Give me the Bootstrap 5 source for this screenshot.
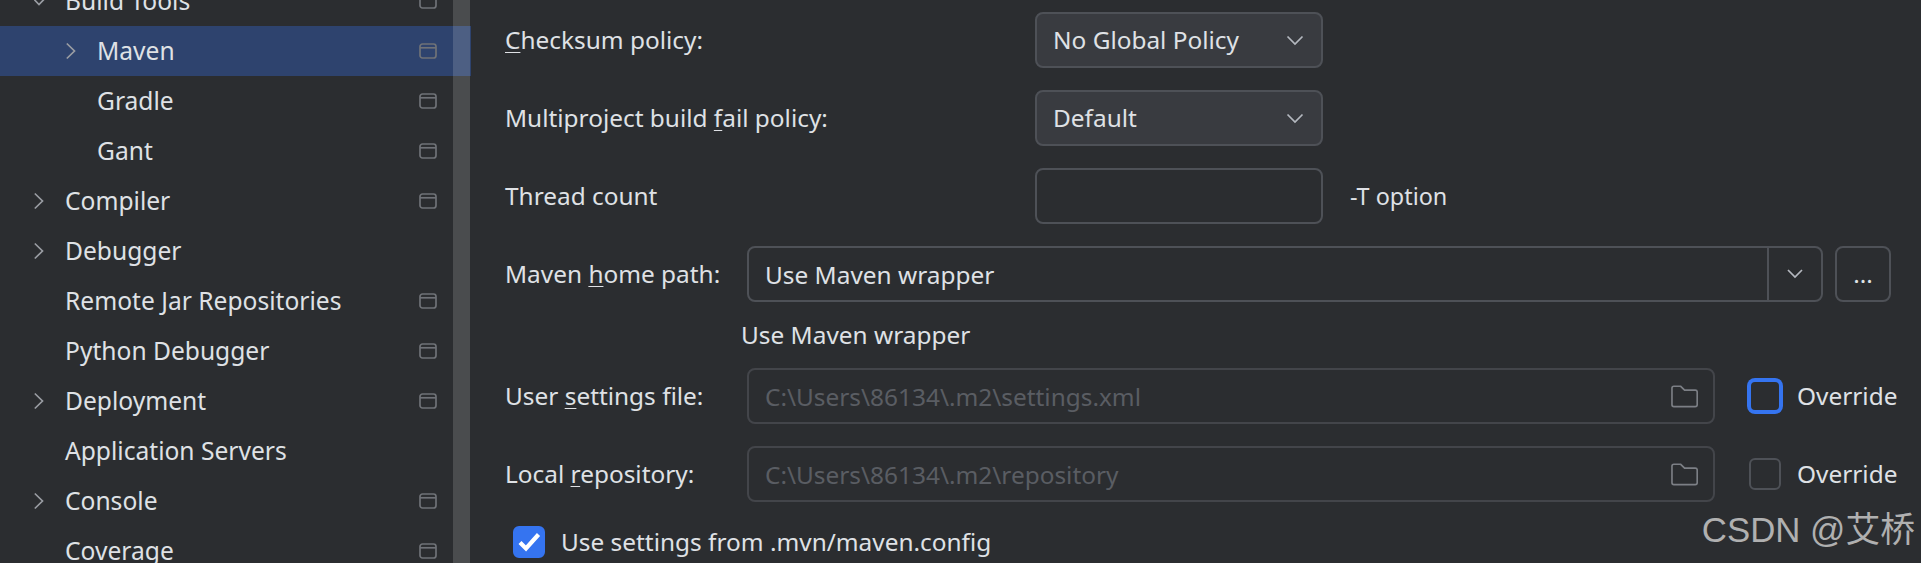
<!DOCTYPE html>
<html lang="en">
<head>
<meta charset="utf-8">
<title>Maven settings</title>
<link href="https://cdn.jsdelivr.net/npm/bootstrap@5.3.0/dist/css/bootstrap.min.css" rel="stylesheet">
<style>
html,body{height:563px;overflow:hidden;background:#2b2d30;}
body{font-family:"Noto Sans","Open Sans",sans-serif;font-size:24.4px;color:#dfe1e5;line-height:30px;position:relative;}
.shell{height:563px;}
.side{width:471px;flex:none;margin-top:-24px;position:relative;height:587px;font-size:24.6px;}
.side-row{height:50px;padding-right:34px;white-space:nowrap;}
.side-row.picked{background:#2e436e;}
.lvl0{padding-left:65px;}
.lvl1{padding-left:97px;}
.chev-slot{width:32px;margin-left:-32px;flex:none;display:flex;}
.chev-slot svg{margin-left:1px;}
.track{position:absolute;top:0;bottom:0;right:1px;width:17px;background:rgba(255,255,255,.15);}
.pane{padding-left:34px;padding-top:12px;min-width:0;}
.set-row{height:56px;margin-bottom:22px;}
.lab-wide{width:530px;flex:none;}
.lab-short{width:242px;flex:none;}
u{text-underline-offset:3px;text-decoration-thickness:1px;}
.form-select.ide,.form-control.ide{width:288px;height:56px;font-size:24.4px;line-height:30px;color:#dfe1e5;border:2px solid #4e5157;border-radius:8px;padding:0 16px;}
.form-select.ide{background-color:#393b40;background-size:18px 12px;background-position:right 17px center;padding-right:44px;background-image:url("data:image/svg+xml,%3csvg xmlns='http://www.w3.org/2000/svg' viewBox='0 0 18 12'%3e%3cpath fill='none' stroke='%23b4b8bf' stroke-width='1.7' d='M1.500 2.500 9 10l7.500-7.500'/%3e%3c/svg%3e");}
.form-control.ide{background:#2b2d30;}
.t-opt{margin-left:27px;font-size:23.4px;}
.combo{width:1076px;height:56px;}
.combo .form-control{height:56px;font-size:24.4px;background:#2b2d30;color:#dfe1e5;border:2px solid #4e5157;border-radius:8px 0 0 8px;padding:0 16px;}
.combo .btn{width:56px;flex:none;height:56px;margin-left:-2px !important;background:#2b2d30;border:2px solid #4e5157;border-radius:0 8px 8px 0;padding:0;}
.dots{width:56px;height:56px;margin-left:12px;background:#2b2d30;border:2px solid #4e5157;border-radius:8px;color:#dfe1e5;padding:0;font-size:24.4px;line-height:30px;}
.hint{height:66px;margin-top:-22px;padding-left:236px;}
.path-box{width:968px;height:56px;border:2px solid #43454a;border-radius:8px;padding:0 15px 0 0;}
.path-box .form-control{background:transparent;border:0;height:52px;font-size:24.4px;padding:0 16px;color:#5a5d63;box-shadow:none;}
.path-box .form-control:disabled{background:transparent;color:#5a5d63;opacity:1;}
.over{margin-left:34px;gap:16px;}
.form-check-input.ide-box{width:32px;height:32px;margin:0;flex:none;background-color:#2b2d30;border:2px solid #4e5157;border-radius:6px;}
.form-check-input.ide-box.lit{border-color:#3574f0;box-shadow:0 0 0 2px #3574f0;}
.form-check-input.ide-box:checked{background-color:#3574f0;border-color:#3574f0;background-size:28px;background-image:url("data:image/svg+xml,%3csvg xmlns='http://www.w3.org/2000/svg' viewBox='0 0 28 28'%3e%3cpath fill='none' stroke='%23fff' stroke-width='4.200' d='M5 14.500l6 6L23.500 6.500'/%3e%3c/svg%3e");}
.cfg-row{height:32px;margin-top:24px;padding-left:8px;gap:16px;}
.mark-w{position:absolute;right:6px;top:508px;font-family:"Liberation Sans","Noto Sans CJK SC",sans-serif;font-size:34.8px;line-height:44px;color:#b0b0b0;white-space:nowrap;}
</style>
</head>
<body>
<svg width="0" height="0" class="position-absolute">
  <symbol id="i-right" viewBox="0 0 12 18"><path d="M.8 1.500 8.500 9 .8 16.500" fill="none" stroke="#9a9da3" stroke-width="1.700"/></symbol>
  <symbol id="i-down" viewBox="0 0 18 12"><path d="M2 2l7 7 7-7" fill="none" stroke="#b4b8bf" stroke-width="1.700"/></symbol>
  <symbol id="i-win" viewBox="0 0 18 16"><rect x="1" y="1" width="16" height="14" rx="2.500" fill="none" stroke="#6f7277" stroke-width="1.700"/><path d="M1 4.800h16" stroke="#6f7277" stroke-width="1.700"/></symbol>
  <symbol id="i-folder" viewBox="0 0 28 24"><path d="M1 4a2 2 0 0 1 2-2h7l4 4h11a2 2 0 0 1 2 2v13a2 2 0 0 1-2 2H3a2 2 0 0 1-2-2z" fill="none" stroke="#7c7f85" stroke-width="1.700"/></symbol>
</svg>
<div class="shell d-flex">
  <aside class="side">
    <div class="side-row lvl0 d-flex align-items-center"><span class="chev-slot"><svg width="12" height="18"><use href="#i-right" transform="rotate(90 5 9)"/></svg></span>Build Tools<svg class="ms-auto" width="18" height="16"><use href="#i-win"/></svg></div>
    <div class="side-row picked lvl1 d-flex align-items-center"><span class="chev-slot"><svg width="12" height="18"><use href="#i-right"/></svg></span>Maven<svg class="ms-auto" width="18" height="16"><use href="#i-win"/></svg></div>
    <div class="side-row lvl1 d-flex align-items-center">Gradle<svg class="ms-auto" width="18" height="16"><use href="#i-win"/></svg></div>
    <div class="side-row lvl1 d-flex align-items-center">Gant<svg class="ms-auto" width="18" height="16"><use href="#i-win"/></svg></div>
    <div class="side-row lvl0 d-flex align-items-center"><span class="chev-slot"><svg width="12" height="18"><use href="#i-right"/></svg></span>Compiler<svg class="ms-auto" width="18" height="16"><use href="#i-win"/></svg></div>
    <div class="side-row lvl0 d-flex align-items-center"><span class="chev-slot"><svg width="12" height="18"><use href="#i-right"/></svg></span>Debugger</div>
    <div class="side-row lvl0 d-flex align-items-center">Remote Jar Repositories<svg class="ms-auto" width="18" height="16"><use href="#i-win"/></svg></div>
    <div class="side-row lvl0 d-flex align-items-center">Python Debugger<svg class="ms-auto" width="18" height="16"><use href="#i-win"/></svg></div>
    <div class="side-row lvl0 d-flex align-items-center"><span class="chev-slot"><svg width="12" height="18"><use href="#i-right"/></svg></span>Deployment<svg class="ms-auto" width="18" height="16"><use href="#i-win"/></svg></div>
    <div class="side-row lvl0 d-flex align-items-center">Application Servers</div>
    <div class="side-row lvl0 d-flex align-items-center"><span class="chev-slot"><svg width="12" height="18"><use href="#i-right"/></svg></span>Console<svg class="ms-auto" width="18" height="16"><use href="#i-win"/></svg></div>
    <div class="side-row lvl0 d-flex align-items-center">Coverage<svg class="ms-auto" width="18" height="16"><use href="#i-win"/></svg></div>
    <div class="track"></div>
  </aside>
  <main class="pane flex-fill">
    <div class="set-row d-flex align-items-center">
      <label class="lab-wide"><u>C</u>hecksum policy:</label>
      <select class="form-select ide"><option>No Global Policy</option></select>
    </div>
    <div class="set-row d-flex align-items-center">
      <label class="lab-wide">Multiproject build <u>f</u>ail policy:</label>
      <select class="form-select ide"><option>Default</option></select>
    </div>
    <div class="set-row d-flex align-items-center">
      <label class="lab-wide">Thread count</label>
      <input class="form-control ide" type="text" aria-label="Thread count">
      <span class="t-opt">-T option</span>
    </div>
    <div class="set-row d-flex align-items-center">
      <label class="lab-short">Maven <u>h</u>ome path:</label>
      <div class="input-group combo flex-nowrap">
        <input class="form-control" type="text" value="Use Maven wrapper" aria-label="Maven home path">
        <button class="btn d-flex align-items-center justify-content-center" type="button" aria-label="Open list"><svg width="18" height="12"><use href="#i-down"/></svg></button>
      </div>
      <button class="dots" type="button">...</button>
    </div>
    <div class="hint d-flex align-items-center">Use Maven wrapper</div>
    <div class="set-row d-flex align-items-center">
      <label class="lab-short">User <u>s</u>ettings file:</label>
      <div class="path-box d-flex align-items-center">
        <input class="form-control flex-fill" type="text" disabled value="C:\Users\86134\.m2\settings.xml" aria-label="User settings file">
        <svg class="flex-none" width="28" height="24"><use href="#i-folder"/></svg>
      </div>
      <div class="over d-flex align-items-center"><input class="form-check-input ide-box lit" type="checkbox" aria-label="Override">Override</div>
    </div>
    <div class="set-row d-flex align-items-center">
      <label class="lab-short">Local <u>r</u>epository:</label>
      <div class="path-box d-flex align-items-center">
        <input class="form-control flex-fill" type="text" disabled value="C:\Users\86134\.m2\repository" aria-label="Local repository">
        <svg class="flex-none" width="28" height="24"><use href="#i-folder"/></svg>
      </div>
      <div class="over d-flex align-items-center"><input class="form-check-input ide-box" type="checkbox" aria-label="Override">Override</div>
    </div>
    <div class="cfg-row d-flex align-items-center"><input class="form-check-input ide-box" type="checkbox" checked aria-label="Use settings">Use settings from .mvn/maven.config</div>
  </main>
</div>
<div class="mark-w">CSDN @艾桥</div>
</body>
</html>
